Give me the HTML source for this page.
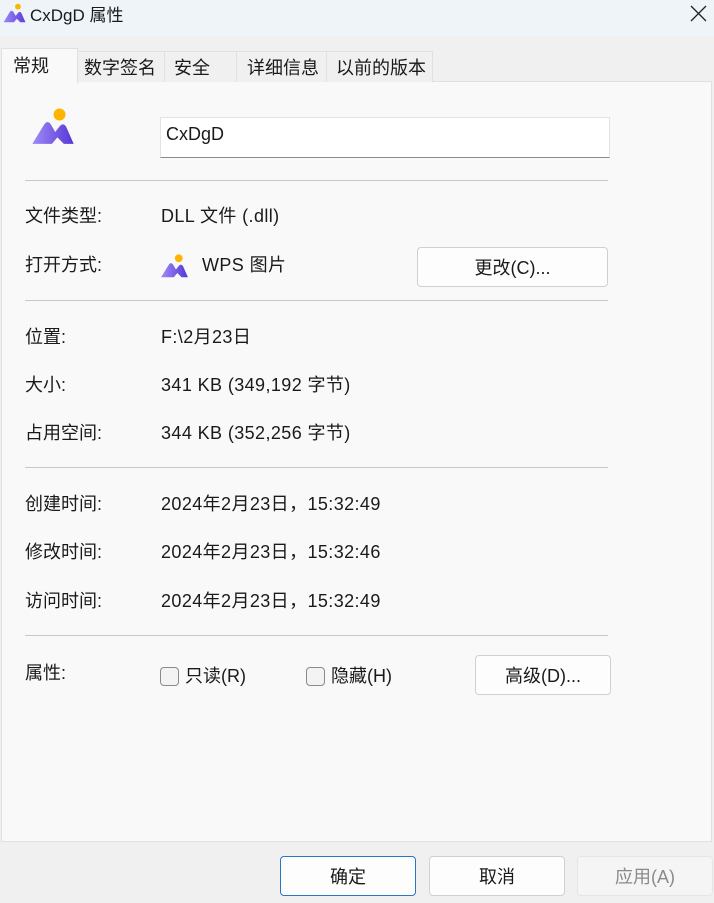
<!DOCTYPE html>
<html><head><meta charset="utf-8"><style>
*{margin:0;padding:0;box-sizing:border-box}
body{width:714px;height:903px;background:#f0f0f0;font-family:"Liberation Sans","Noto Sans CJK SC",sans-serif;font-size:18px;line-height:20px;color:#1a1a1a;position:relative;overflow:hidden}
.abs{position:absolute}
.title{left:0;top:0;width:714px;height:36px;background:#eff4f9}
.tab{position:absolute;top:51px;height:31px;background:#f0f0f0;border:1px solid #e0e0e0;border-bottom:none;font-size:18px;line-height:33px;padding-left:7px;white-space:nowrap}
.panel{left:1px;top:81px;width:711px;height:761px;background:#f9f9f9;border:1px solid #e0e0e0}
.sep{position:absolute;left:25px;width:583px;height:1px;background:#c8c8c8}
.lbl{position:absolute;left:25px}
.val{position:absolute;left:161px;white-space:nowrap;letter-spacing:0.4px}
.btn{position:absolute;background:#fdfdfd;border:1px solid #d0d0d0;border-radius:4px;display:flex;align-items:center;justify-content:center;font-size:18px;padding-top:2px}
.cb{position:absolute;width:19px;height:19px;border:1px solid #8a8a8a;border-radius:4px;background:#f3f3f3}
</style></head><body>
<div class="abs title"></div>
<svg class="abs" style="left:3px;top:3px" width="23" height="20" viewBox="0 0 40 34"><defs><linearGradient id="g" x1="0" x2="1"><stop offset="0" stop-color="#9d86f5"/><stop offset="1" stop-color="#5b3fd9"/></linearGradient></defs><circle cx="26" cy="6" r="5" fill="#ffb400"/><path d="M1 33 L12 15 Q15 11 18 15 L22 22 L26 17 Q29 13 32 17 L39 33 L30 33 L24 27 L19 33Z" fill="url(#g)"/></svg>
<div class="abs" style="left:30px;top:6px;font-size:17px">CxDgD 属性</div>
<svg class="abs" style="left:690px;top:5px" width="17" height="17" viewBox="0 0 17 17"><path d="M1 1L16 16M16 1L1 16" stroke="#222" stroke-width="1.3"/></svg>

<div class="abs panel"></div>
<div class="tab" style="left:1px;top:48px;width:77px;height:35px;background:#f9f9f9;line-height:35px;padding-left:11px;z-index:2">常规</div>
<div class="tab" style="left:77px;width:88px;padding-left:6px">数字签名</div>
<div class="tab" style="left:164px;width:73px;padding-left:9px">安全</div>
<div class="tab" style="left:236px;width:91px;padding-left:10px">详细信息</div>
<div class="tab" style="left:326px;width:107px;padding-left:9px">以前的版本</div>

<svg class="abs" style="left:31px;top:108px" width="44" height="37" viewBox="0 0 40 34"><defs><linearGradient id="g2" x1="0" x2="1"><stop offset="0" stop-color="#a08af6"/><stop offset="1" stop-color="#5537d6"/></linearGradient></defs><circle cx="26" cy="6" r="5.5" fill="#ffb400"/><path d="M1 33 L12 15 Q15 11 18 15 L22 22 L26 17 Q29 13 32 17 L39 33 L30 33 L24 27 L19 33Z" fill="url(#g2)"/></svg>
<div class="abs" style="left:160px;top:117px;width:450px;height:41px;background:#fff;border:1px solid #e3e3e3;border-bottom:1px solid #8a8a8a;padding:6px 0 0 5px">CxDgD</div>

<div class="sep" style="top:180px"></div>
<div class="lbl" style="top:206px">文件类型:</div><div class="val" style="top:206px">DLL 文件 (.dll)</div>
<div class="lbl" style="top:255px">打开方式:</div>
<svg class="abs" style="left:160px;top:254px" width="29" height="24" viewBox="0 0 40 34"><circle cx="26" cy="6" r="5.5" fill="#ffb400"/><path d="M1 33 L12 15 Q15 11 18 15 L22 22 L26 17 Q29 13 32 17 L39 33 L30 33 L24 27 L19 33Z" fill="url(#g2)"/></svg>
<div class="val" style="left:202px;top:255px">WPS 图片</div>
<div class="btn" style="left:417px;top:247px;width:191px;height:40px">更改(C)...</div>

<div class="sep" style="top:300px"></div>
<div class="lbl" style="top:327px">位置:</div><div class="val" style="top:327px">F:\2月23日</div>
<div class="lbl" style="top:375px">大小:</div><div class="val" style="top:375px">341 KB (349,192 字节)</div>
<div class="lbl" style="top:423px">占用空间:</div><div class="val" style="top:423px">344 KB (352,256 字节)</div>

<div class="sep" style="top:467px"></div>
<div class="lbl" style="top:494px">创建时间:</div><div class="val" style="top:494px">2024年2月23日，15:32:49</div>
<div class="lbl" style="top:542px">修改时间:</div><div class="val" style="top:542px">2024年2月23日，15:32:46</div>
<div class="lbl" style="top:591px">访问时间:</div><div class="val" style="top:591px">2024年2月23日，15:32:49</div>

<div class="sep" style="top:635px"></div>
<div class="lbl" style="top:663px">属性:</div>
<div class="cb" style="left:160px;top:667px"></div><div class="abs" style="left:185px;top:666px">只读(R)</div>
<div class="cb" style="left:306px;top:667px"></div><div class="abs" style="left:331px;top:666px">隐藏(H)</div>
<div class="btn" style="left:475px;top:655px;width:136px;height:40px">高级(D)...</div>

<div class="btn" style="left:280px;top:856px;width:136px;height:40px;border-color:#2a76c6">确定</div>
<div class="btn" style="left:429px;top:856px;width:136px;height:40px">取消</div>
<div class="btn" style="left:577px;top:856px;width:136px;height:40px;background:#f5f5f5;border-color:#e5e5e5;color:#8a8a8a">应用(A)</div>
</body></html>
